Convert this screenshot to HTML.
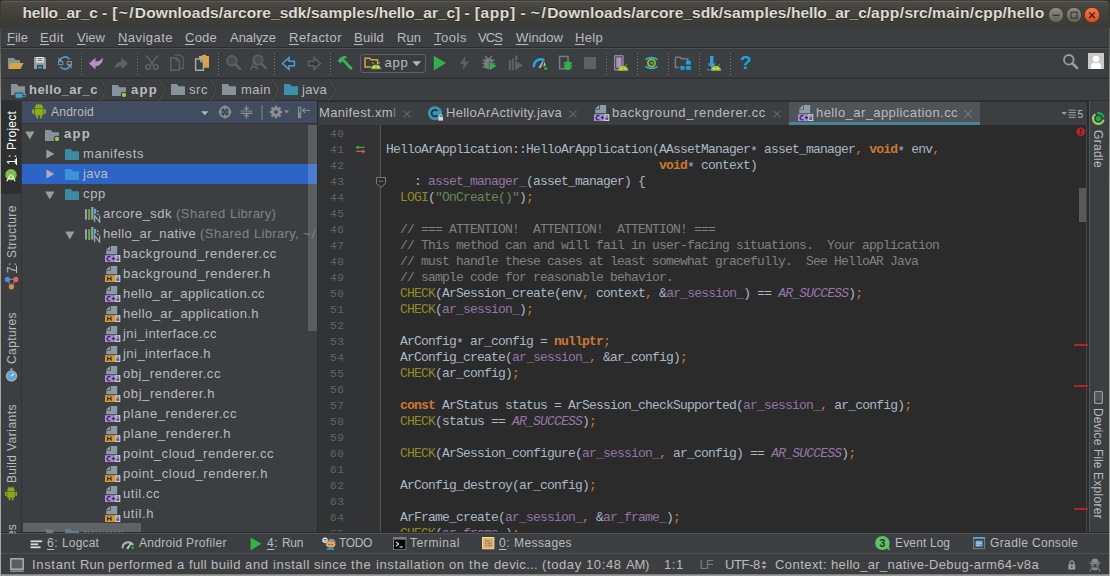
<!DOCTYPE html>
<html><head><meta charset="utf-8"><title>hello_ar_c</title>
<style>
html,body{margin:0;padding:0;}
body{width:1110px;height:576px;overflow:hidden;background:#3c3f41;position:relative;font-family:"Liberation Sans", sans-serif;}
#r{position:absolute;left:0;top:0;width:1110px;height:576px;overflow:hidden;}
#r div,#r svg,#r span.t,#r pre{position:absolute;}
span.t{white-space:pre;line-height:16px;text-underline-offset:1.5px;}
u{text-decoration:underline;text-decoration-thickness:1px;}
pre{margin:0;font-family:"Liberation Mono", monospace;}
</style></head>
<body><div id="r">
<div style="left:0px;top:0px;width:1110px;height:28px;background:#33322e;"></div>
<div style="left:0px;top:0px;width:1110px;height:28px;background:linear-gradient(#3f3e3a 0px,#3f3e3a 1px,#5b5a54 1px,#5b5a54 2px,#4b4a45 2px,#45443f 8px,#3e3d39 20px,#3b3a36 28px);border-radius:5px 6px 0 0;"></div>
<div style="left:0px;top:4px;width:1px;height:24px;background:#3a3935;"></div>
<div style="left:1109px;top:4px;width:1px;height:24px;background:#3a3935;"></div>
<div style="left:0px;top:28px;width:1110px;height:20px;background:#3c3f41;"></div>
<div style="left:0px;top:47px;width:1110px;height:1px;background:#2a2c2d;"></div>
<div style="left:0px;top:48px;width:1110px;height:1px;background:#4d5052;"></div>
<div style="left:0px;top:49px;width:1110px;height:29px;background:#3c3f41;"></div>
<div style="left:0px;top:77px;width:1110px;height:1px;background:#36393b;"></div>
<div style="left:0px;top:78px;width:1110px;height:1px;background:#2d2f31;"></div>
<div style="left:0px;top:79px;width:1110px;height:22px;background:#3c3f41;"></div>
<div style="left:0px;top:100px;width:1110px;height:1px;background:#2f3132;"></div>
<div style="left:0px;top:101px;width:22px;height:432px;background:#3c3f41;"></div>
<div style="left:1px;top:101px;width:20px;height:93px;background:#2d2f30;"></div>
<div style="left:21px;top:101px;width:1px;height:432px;background:#323435;"></div>
<div style="left:22px;top:101px;width:295px;height:22px;background:#414c60;"></div>
<div style="left:22px;top:123px;width:295px;height:1px;background:#2f3440;"></div>
<div style="left:22px;top:124px;width:295px;height:409px;background:#3c3f41;"></div>
<div style="left:22px;top:164px;width:295px;height:20px;background:#2d64c8;"></div>
<div style="left:308px;top:125px;width:8.5px;height:206px;background:rgba(255,255,255,.16);"></div>
<div style="left:22px;top:523px;width:286px;height:9px;background:#3d4042;"></div>
<div style="left:23px;top:523px;width:118px;height:9px;background:#606264;"></div>
<div style="left:317px;top:101px;width:1px;height:432px;background:#2b2b2b;"></div>
<div style="left:318px;top:101px;width:770px;height:24px;background:#3c3f41;"></div>
<div style="left:317px;top:101px;width:771px;height:1px;background:#2b2b2b;"></div>
<div style="left:789px;top:102px;width:191px;height:20px;background:#4e5457;"></div>
<div style="left:789px;top:122px;width:191px;height:3px;background:#4a8396;"></div>
<div style="left:318px;top:125px;width:62px;height:408px;background:#313335;"></div>
<div style="left:380px;top:125px;width:1px;height:408px;background:#555555;"></div>
<div style="left:381px;top:125px;width:697px;height:408px;background:#2b2b2b;"></div>
<div style="left:1078px;top:125px;width:10px;height:408px;background:#2b2b2b;"></div>
<div style="left:1079px;top:188px;width:8px;height:34px;background:#595959;"></div>
<div style="left:1086px;top:125px;width:1px;height:407px;background:#48494b;"></div>
<div style="left:1087px;top:101px;width:2px;height:431px;background:#2b2b2b;"></div>
<div style="left:1090px;top:101px;width:20px;height:432px;background:#3c3f41;"></div>
<div style="left:1089px;top:101px;width:1px;height:431px;background:#555759;"></div>
<div style="left:1074px;top:344px;width:14px;height:2px;background:#b02626;"></div>
<div style="left:1074px;top:385px;width:14px;height:2px;background:#b02626;"></div>
<div style="left:1074px;top:508px;width:14px;height:2px;background:#b02626;"></div>
<div style="left:0px;top:532px;width:1110px;height:1px;background:#2b2b2b;"></div>
<div style="left:0px;top:533px;width:1110px;height:1px;background:#505254;"></div>
<div style="left:0px;top:534px;width:1110px;height:20px;background:#3c3f41;"></div>
<div style="left:0px;top:553px;width:1110px;height:1px;background:#4e4f50;"></div>
<div style="left:0px;top:554px;width:1110px;height:22px;background:#3c3f41;"></div>
<div style="left:0px;top:574px;width:1110px;height:2px;background:linear-gradient(#76746f,#aaa69f);"></div>
<div style="left:0px;top:28px;width:1px;height:548px;background:linear-gradient(#4a4843 0,#a9a69f 90px,#a9a69f 100%);"></div>
<div style="left:1109px;top:28px;width:1px;height:548px;background:linear-gradient(#5e5d59 0,#aaa69f 160px,#aaa69f 100%);"></div>
<div style="left:81px;top:53px;width:1px;height:22px;background:repeating-linear-gradient(#77797b 0 1px,transparent 1px 3px);"></div>
<div style="left:137px;top:53px;width:1px;height:22px;background:repeating-linear-gradient(#77797b 0 1px,transparent 1px 3px);"></div>
<div style="left:218px;top:53px;width:1px;height:22px;background:repeating-linear-gradient(#77797b 0 1px,transparent 1px 3px);"></div>
<div style="left:274px;top:53px;width:1px;height:22px;background:repeating-linear-gradient(#77797b 0 1px,transparent 1px 3px);"></div>
<div style="left:330px;top:53px;width:1px;height:22px;background:repeating-linear-gradient(#77797b 0 1px,transparent 1px 3px);"></div>
<div style="left:606px;top:53px;width:1px;height:22px;background:repeating-linear-gradient(#77797b 0 1px,transparent 1px 3px);"></div>
<div style="left:637px;top:53px;width:1px;height:22px;background:repeating-linear-gradient(#77797b 0 1px,transparent 1px 3px);"></div>
<div style="left:668px;top:53px;width:1px;height:22px;background:repeating-linear-gradient(#77797b 0 1px,transparent 1px 3px);"></div>
<div style="left:699px;top:53px;width:1px;height:22px;background:repeating-linear-gradient(#77797b 0 1px,transparent 1px 3px);"></div>
<div style="left:730px;top:53px;width:1px;height:22px;background:repeating-linear-gradient(#77797b 0 1px,transparent 1px 3px);"></div>
<svg style="left:7px;top:56px;" width="17" height="14" viewBox="0 0 17 14"><path d="M1 2h6l1.5 2H13v7H1z" fill="#87939a"/><path d="M4 7h12.5l-3 6H0.8z" fill="#d9a343"/></svg>
<svg style="left:33px;top:56px;" width="14" height="14" viewBox="0 0 14 14"><path d="M1 1h10.5L13 2.5V13H1z" fill="#9a9da0"/><rect x="3.5" y="1" width="7" height="5.5" fill="#f4f4f4"/><rect x="4.5" y="2.2" width="5" height="1" fill="#555"/><rect x="4.5" y="4.2" width="5" height="1" fill="#555"/><rect x="4" y="9" width="6" height="4" fill="#3c3f41"/><rect x="5.2" y="10.4" width="3.6" height="2" fill="#3d9dd6"/></svg>
<svg style="left:57px;top:55px;" width="16" height="16" viewBox="0 0 16 16"><path d="M3.2 5.2A5.3 5.3 0 0 1 12.6 4.4" fill="none" stroke="#4a9fd8" stroke-width="1.6"/><path d="M1.3 2.2v4h4z" fill="#4a9fd8"/><path d="M12.8 10.8A5.3 5.3 0 0 1 3.4 11.6" fill="none" stroke="#4a9fd8" stroke-width="1.6"/><path d="M14.7 13.8v-4h-4z" fill="#4a9fd8"/><rect x="1.6" y="6.6" width="4.2" height="3" fill="none" stroke="#8a8d8f" stroke-width="1.1"/><rect x="10.2" y="6.6" width="4.2" height="3" fill="none" stroke="#8a8d8f" stroke-width="1.1"/></svg>
<svg style="left:88px;top:56px;" width="16" height="15" viewBox="0 0 16 15"><path d="M1 7.5L7.5 1.8V5.4C11 5.4 13.6 3.9 15 1.5C15 7 12 10 7.5 10.2V13.6z" fill="#ba8acb"/></svg>
<svg style="left:113px;top:56px;" width="16" height="15" viewBox="0 0 16 15"><path d="M15 7.5L8.5 1.8V5.4C5 5.4 2.4 7.6 1.4 12.5C3.3 10.6 5.6 10.2 8.5 10.2V13.6z" fill="#5e6163"/></svg>
<svg style="left:144px;top:54px;" width="16" height="17" viewBox="0 0 16 17"><path d="M2.2 1.2L9.6 11.4M13.8 1.2L6.4 11.4" stroke="#5e6163" stroke-width="1.5" fill="none"/><circle cx="4.2" cy="13" r="2.3" fill="none" stroke="#5e6163" stroke-width="1.6"/><circle cx="11.8" cy="13" r="2.3" fill="none" stroke="#5e6163" stroke-width="1.6"/></svg>
<svg style="left:169px;top:54px;" width="16" height="17" viewBox="0 0 16 17"><path d="M5.5 1.2h6L14.3 4v10.3H11" fill="none" stroke="#5e6163" stroke-width="1.3"/><path d="M1.8 3.8h5.8l2.8 2.8V16.2H1.8z" fill="none" stroke="#5e6163" stroke-width="1.5"/><path d="M7.2 4v3h3" fill="none" stroke="#5e6163" stroke-width="1.1"/></svg>
<svg style="left:194px;top:54px;" width="16" height="17" viewBox="0 0 16 17"><path d="M5 2h3.2v-1h3.6v1H15v11.8H5z" fill="#d9a343"/><rect x="9" y="0.8" width="3" height="1" fill="#b5b5b5"/><path d="M1.6 5h5.2l2.6 2.6V16.2H1.6z" fill="#3c3f41" stroke="#a9a9a9" stroke-width="1.4"/><path d="M6.6 5.4v2.6h2.6" fill="none" stroke="#a9a9a9" stroke-width="1"/></svg>
<svg style="left:225px;top:54px;" width="17" height="17" viewBox="0 0 17 17"><circle cx="6.8" cy="6.8" r="4.9" fill="#4a4c4e" stroke="#5e6163" stroke-width="1.7"/><path d="M10.4 10.4L15 15" stroke="#5e6163" stroke-width="2.6" stroke-linecap="round"/></svg>
<svg style="left:249px;top:54px;" width="18" height="17" viewBox="0 0 18 17"><circle cx="9" cy="6" r="4.7" fill="#4a4c4e" stroke="#5e6163" stroke-width="1.7"/><path d="M12.4 9.6L16.5 13.8" stroke="#5e6163" stroke-width="2.6" stroke-linecap="round"/><path d="M1.6 16L5.2 7.6L8.8 16M2.8 13h4.8" stroke="#5e6163" stroke-width="1.3" fill="none"/></svg>
<svg style="left:281px;top:56px;" width="15" height="15" viewBox="0 0 15 15"><path d="M1.6 7.5L8 1.6V5.2H13.4V9.8H8V13.4z" fill="#36393b" stroke="#4a9fd8" stroke-width="1.5" stroke-linejoin="miter"/></svg>
<svg style="left:307px;top:56px;" width="15" height="15" viewBox="0 0 15 15"><path d="M13.4 7.5L7 1.6V5.2H1.6V9.8H7V13.4z" fill="#36393b" stroke="#5e6163" stroke-width="1.5"/></svg>
<svg style="left:337px;top:55px;" width="16" height="16" viewBox="0 0 16 16"><path d="M6.4 5.2L14 13.2" stroke="#3bb254" stroke-width="2.8" stroke-linecap="round"/><path d="M1 6.4C1.6 3.2 5 0.6 9.2 1L9.8 3.4C8.2 3.2 7 3.8 6.2 4.6L3.8 8.6z" fill="#3bb254"/></svg>
<div style="left:360px;top:54px;width:64px;height:17px;border:1px solid #5f6264;border-radius:3px;background:#3a3d3f;"></div>
<svg style="left:364px;top:57px;" width="18" height="13" viewBox="0 0 18 13"><path d="M1 1.2h4.6l1.4 1.6h6.6V10H1z" fill="none" stroke="#d9a343" stroke-width="1.5"/><path d="M6.6 12.4a5.4 5.2 0 0 1 10.8 0z" fill="#a4c639" stroke="#3a3d3f" stroke-width=".8"/><path d="M8.4 5.2l1.2 2M15.6 5.2l-1.2 2" stroke="#a4c639" stroke-width="1"/><circle cx="9.8" cy="10" r=".8" fill="#fff"/><circle cx="14.2" cy="10" r=".8" fill="#fff"/></svg>
<svg style="left:412px;top:61px;" width="10" height="6" viewBox="0 0 10 6"><path d="M0.4 0.2H9L4.7 5.2z" fill="#b4b4b4"/></svg>
<svg style="left:433px;top:55px;" width="14" height="16" viewBox="0 0 14 16"><path d="M0.8 0.8L13 8L0.8 15.4z" fill="#32b14a"/></svg>
<svg style="left:459px;top:55px;" width="11" height="16" viewBox="0 0 11 16"><path d="M6.6 0.4L0.8 9h3.8L3.6 15.6 9.8 6.6H6z" fill="#5e6163"/></svg>
<svg style="left:482px;top:55px;" width="16" height="16" viewBox="0 0 16 16"><ellipse cx="6.6" cy="8.6" rx="4.6" ry="5.6" fill="#7a7d80"/><path d="M0.8 5.2h11.6M0.4 8.6h12.4M0.8 12h11.6M3.4 0.8l2 3M9.8 0.8l-2 3" stroke="#7a7d80" stroke-width="1.4"/><path d="M7.4 6.2L15.2 10.8 7.4 15.6z" fill="#32b14a" stroke="#3c3f41" stroke-width=".6"/></svg>
<svg style="left:508px;top:55px;" width="16" height="16" viewBox="0 0 16 16"><rect x="0.8" y="5" width="2" height="10" fill="#5e6163"/><rect x="3.8" y="3.6" width="2" height="11.4" fill="#5e6163"/><rect x="7" y="0.6" width="2.6" height="4.4" fill="#5e6163"/><path d="M7 5.6L15 10.4 7 15.2z" fill="#5e6163"/></svg>
<svg style="left:532px;top:57px;" width="18" height="15" viewBox="0 0 18 15"><path d="M2 10.2A6.8 6.8 0 0 1 12.4 3.4" fill="none" stroke="#22a7f0" stroke-width="2.3"/><path d="M6.2 10.6L10.6 4l1 .6-2.8 6.6z" fill="#a8a8a8"/><path d="M12.2 4.6l1.6 4.2-2.4 1.4z" fill="#c8c8c8"/><circle cx="13.8" cy="11.6" r="2.4" fill="#2ea043" stroke="#262626" stroke-width=".9"/></svg>
<svg style="left:558px;top:55px;" width="15" height="16" viewBox="0 0 15 16"><rect x="1.6" y="1.4" width="8.4" height="12.4" fill="none" stroke="#7a7d80" stroke-width="1.5"/><ellipse cx="9.8" cy="10.6" rx="3" ry="4.6" fill="#32b14a"/><path d="M5.6 8h8.4M5.2 10.6h9.2M5.6 13.2h8.4" stroke="#32b14a" stroke-width="1.3"/></svg>
<svg style="left:584px;top:57px;" width="12" height="12" viewBox="0 0 12 12"><rect width="12" height="12" fill="#5e6163"/></svg>
<svg style="left:613px;top:55px;" width="16" height="16" viewBox="0 0 16 16"><rect x="1.6" y="0.8" width="8.4" height="14" rx=".6" fill="none" stroke="#8a8d8f" stroke-width="1.4"/><rect x="3.2" y="2.4" width="5.4" height="10.4" fill="#b689c9"/><path d="M5 15.8a5.1 5 0 0 1 10.2 0z" fill="#a4c639"/><path d="M6.6 9.4l1 1.6M13.6 9.4l-1 1.6" stroke="#a4c639" stroke-width=".9"/><circle cx="8.2" cy="13.6" r=".7" fill="#fff"/><circle cx="12" cy="13.6" r=".7" fill="#fff"/></svg>
<svg style="left:644px;top:56px;" width="15" height="14" viewBox="0 0 15 14"><path d="M1.4 3.6Q7.5-0.6 13.6 3.6" fill="none" stroke="#29b6d8" stroke-width="1.5"/><path d="M1.4 10.4Q7.5 14.6 13.6 10.4" fill="none" stroke="#29b6d8" stroke-width="1.5"/><circle cx="7.5" cy="7" r="3.6" fill="none" stroke="#9bbf30" stroke-width="1.7"/><circle cx="7.8" cy="7" r="1.6" fill="#3daa6a"/></svg>
<svg style="left:674px;top:56px;" width="18" height="14" viewBox="0 0 18 14"><path d="M1.4 1.2h4.6l1.4 1.6h6.4v3M1.4 1.2V11.6H5" fill="none" stroke="#7a7d80" stroke-width="1.5"/><rect x="12" y="4.6" width="4.8" height="4" fill="#1ba1e2"/><rect x="6.4" y="10" width="4.2" height="3.8" fill="#1ba1e2"/><rect x="12" y="10" width="4.8" height="3.8" fill="#1ba1e2"/></svg>
<svg style="left:706px;top:55px;" width="16" height="16" viewBox="0 0 16 16"><path d="M4 1h3.4v7.6H10L5.7 12.8 1.4 8.6H4z" fill="#2d9ee0"/><rect x="0.8" y="14.2" width="3.2" height="1" fill="#2d9ee0"/><path d="M4.8 15.8a5.1 5 0 0 1 10.2 0z" fill="#a4c639"/><path d="M6.4 9.4l1 1.6M13.4 9.4l-1 1.6" stroke="#a4c639" stroke-width=".9"/><circle cx="8" cy="13.6" r=".7" fill="#fff"/><circle cx="11.8" cy="13.6" r=".7" fill="#fff"/></svg>
<svg style="left:1062px;top:53px;" width="17" height="17" viewBox="0 0 17 17"><circle cx="6.8" cy="6.8" r="4.8" fill="none" stroke="#9a9c9e" stroke-width="1.8"/><path d="M10.4 10.4L15 15" stroke="#9a9c9e" stroke-width="2.6" stroke-linecap="round"/></svg>
<svg style="left:1088px;top:53px;" width="16" height="16" viewBox="0 0 16 16"><rect width="16" height="16" fill="#c8c8c8"/><circle cx="8" cy="6" r="3.2" fill="#fff"/><path d="M3 16v-3.4a2.6 2.6 0 0 1 2.6-2.6h4.8a2.6 2.6 0 0 1 2.6 2.6V16z" fill="#fff"/></svg>
<svg style="left:0;top:0" width="0" height="0"><defs><linearGradient id="gg" x1="0" y1="0" x2="0" y2="1"><stop offset="0" stop-color="#8f8d85"/><stop offset="1" stop-color="#605f59"/></linearGradient><linearGradient id="gc" x1="0" y1="0" x2="0" y2="1"><stop offset="0" stop-color="#f27e55"/><stop offset="1" stop-color="#dd4814"/></linearGradient></defs></svg>
<svg style="left:1046.5px;top:5.5px;" width="18" height="18" viewBox="0 0 18 18"><circle cx="9" cy="9" r="7.7" fill="url(#gg)" stroke="#32312d" stroke-width=".8"/><path d="M5.6 9.3h6.8" stroke="#3a3935" stroke-width="1.4"/></svg>
<svg style="left:1064.5px;top:5.5px;" width="18" height="18" viewBox="0 0 18 18"><circle cx="9" cy="9" r="7.7" fill="url(#gg)" stroke="#32312d" stroke-width=".8"/><rect x="6" y="6.2" width="6" height="6" fill="none" stroke="#3a3935" stroke-width="1.2"/></svg>
<svg style="left:1082.5px;top:5.5px;" width="18" height="18" viewBox="0 0 18 18"><circle cx="9" cy="9" r="7.7" fill="url(#gc)" stroke="#4e2a1a" stroke-width=".8"/><path d="M6.2 6.4l5.6 5.6M11.8 6.4l-5.6 5.6" stroke="#3d2016" stroke-width="1.3"/></svg>
<svg style="left:11px;top:84px;" width="14" height="11" viewBox="0 0 14 11"><path d="M0 0h5.9l1.7 2.2H14V11H0z" fill="#87939a"/></svg>
<svg style="left:14px;top:92px;" width="13" height="7" viewBox="0 0 13 7"><path d="M1 1h8v3.4a2 2 0 0 1-2 2H3a2 2 0 0 1-2-2z" fill="#40a0d0" stroke="#3c3f41" stroke-width="1"/><path d="M9 2h1.6a1.2 1.2 0 0 1 0 2.6H9" fill="none" stroke="#40a0d0" stroke-width="1"/></svg>
<svg style="left:97.5px;top:79px;" width="9" height="22" viewBox="0 0 9 22"><path d="M0.5 0L7 11 0.5 22" fill="none" stroke="#2f3132" stroke-width="1"/><path d="M1.5 0L8 11 1.5 22" fill="none" stroke="#505355" stroke-width="1"/></svg>
<svg style="left:112px;top:84.5px;" width="14" height="11" viewBox="0 0 14 11"><path d="M0 0h5.9l1.7 2.2H14V11H0z" fill="#87939a"/></svg>
<svg style="left:119.5px;top:90.5px;" width="8" height="8" viewBox="0 0 8 8"><circle cx="4" cy="4" r="2.7" fill="#a4c639" stroke="#3c3f41" stroke-width="1.1"/></svg>
<svg style="left:157px;top:79px;" width="9" height="22" viewBox="0 0 9 22"><path d="M0.5 0L7 11 0.5 22" fill="none" stroke="#2f3132" stroke-width="1"/><path d="M1.5 0L8 11 1.5 22" fill="none" stroke="#505355" stroke-width="1"/></svg>
<svg style="left:171px;top:84px;" width="14" height="11" viewBox="0 0 14 11"><path d="M0 0h5.9l1.7 2.2H14V11H0z" fill="#87939a"/></svg>
<svg style="left:208px;top:79px;" width="9" height="22" viewBox="0 0 9 22"><path d="M0.5 0L7 11 0.5 22" fill="none" stroke="#2f3132" stroke-width="1"/><path d="M1.5 0L8 11 1.5 22" fill="none" stroke="#505355" stroke-width="1"/></svg>
<svg style="left:222px;top:84px;" width="14" height="11" viewBox="0 0 14 11"><path d="M0 0h5.9l1.7 2.2H14V11H0z" fill="#87939a"/></svg>
<svg style="left:270px;top:79px;" width="9" height="22" viewBox="0 0 9 22"><path d="M0.5 0L7 11 0.5 22" fill="none" stroke="#2f3132" stroke-width="1"/><path d="M1.5 0L8 11 1.5 22" fill="none" stroke="#505355" stroke-width="1"/></svg>
<svg style="left:284px;top:84px;" width="14" height="11" viewBox="0 0 14 11"><path d="M0 0h5.9l1.7 2.2H14V11H0z" fill="#3d8fb0"/></svg>
<svg style="left:327px;top:79px;" width="9" height="22" viewBox="0 0 9 22"><path d="M0.5 0L7 11 0.5 22" fill="none" stroke="#2f3132" stroke-width="1"/><path d="M1.5 0L8 11 1.5 22" fill="none" stroke="#505355" stroke-width="1"/></svg>
<svg style="left:31px;top:103px;" width="16" height="16" viewBox="0 0 16 16"><path d="M3.6 5.4a4.4 4.2 0 0 1 8.8 0z" fill="#8aaa1c"/><path d="M5 0.6l1.2 1.8M11 0.6L9.8 1.8" stroke="#8aaa1c" stroke-width=".9"/><rect x="3.6" y="6" width="8.8" height="6.6" rx=".8" fill="#8aaa1c"/><rect x="1.2" y="6" width="1.8" height="5" rx=".9" fill="#8aaa1c"/><rect x="13" y="6" width="1.8" height="5" rx=".9" fill="#8aaa1c"/><rect x="5.2" y="12" width="1.9" height="3.4" rx=".9" fill="#8aaa1c"/><rect x="8.9" y="12" width="1.9" height="3.4" rx=".9" fill="#8aaa1c"/></svg>
<svg style="left:201px;top:111px;" width="8" height="5" viewBox="0 0 8 5"><path d="M0.2 0.2H7.4L3.8 4.2z" fill="#b4b4b4"/></svg>
<svg style="left:218px;top:105px;" width="14" height="14" viewBox="0 0 14 14"><circle cx="7" cy="7" r="5.2" fill="none" stroke="#8c8e90" stroke-width="1.9"/><path d="M7 0.6v4.2M7 9.2v4.2M0.6 7h4.2M9.2 7h4.2" stroke="#8c8e90" stroke-width="1.7"/></svg>
<svg style="left:240px;top:105px;" width="13" height="14" viewBox="0 0 13 14"><path d="M0.6 6h11.8M0.6 8.4h11.8M6.5 0.4v4.2M6.5 13.6V9.6M4.2 2.6l2.3 2.2 2.3-2.2M4.2 11.6l2.3-2.2 2.3 2.2" fill="none" stroke="#8c8e90" stroke-width="1.1"/></svg>
<div style="left:261px;top:105px;width:2px;height:15px;background:linear-gradient(90deg,#6c7078,#5a5f68);"></div>
<svg style="left:269px;top:105px;" width="14" height="14" viewBox="0 0 14 14"><circle cx="7" cy="7" r="3.3" fill="none" stroke="#8c8e90" stroke-width="2.8"/><path d="M7 0.8v2.4M7 10.8v2.4M0.8 7h2.4M10.8 7h2.4M2.6 2.6l1.7 1.7M9.7 9.7l1.7 1.7M2.6 11.4l1.7-1.7M9.7 4.3l1.7-1.7" stroke="#8c8e90" stroke-width="2.4"/></svg>
<svg style="left:284px;top:110px;" width="5" height="4" viewBox="0 0 5 4"><path d="M0 0.2H5L2.5 3.4z" fill="#8c8e90"/></svg>
<svg style="left:297px;top:105px;" width="14" height="14" viewBox="0 0 14 14"><rect x="1.5" y="2.3" width="2.2" height="10.4" fill="none" stroke="#8c8e90" stroke-width="1"/><rect x="1.9" y="7.6" width="1.4" height="4.6" fill="#8c8e90"/><path d="M5.6 5.5h7.4M8 3.2L5.6 5.5 8 7.8" fill="none" stroke="#8c8e90" stroke-width="1.1"/></svg>
<svg style="left:24.5px;top:130.5px;" width="10" height="9" viewBox="0 0 10 9"><path d="M0.2 0.6H9.4L4.8 8.6z" fill="#9c9c9c"/></svg>
<svg style="left:45px;top:129.5px;" width="14" height="11" viewBox="0 0 14 11"><path d="M0 0h5.9l1.7 2.2H14V11H0z" fill="#87939a"/></svg>
<svg style="left:52.5px;top:134.5px;" width="8" height="8" viewBox="0 0 8 8"><circle cx="4" cy="4" r="2.7" fill="#a4c639" stroke="#3c3f41" stroke-width="1.1"/></svg>
<svg style="left:46px;top:148.5px;" width="9" height="10" viewBox="0 0 9 10"><path d="M0.4 0.4L8.4 5 0.4 9.6z" fill="#9c9c9c"/></svg>
<svg style="left:65px;top:148.8px;" width="14" height="11" viewBox="0 0 14 11"><path d="M0 0h5.9l1.7 2.2H14V11H0z" fill="#3d8ba3"/></svg>
<svg style="left:46px;top:168.5px;" width="9" height="10" viewBox="0 0 9 10"><path d="M0.4 0.4L8.4 5 0.4 9.6z" fill="#a9adb5"/></svg>
<svg style="left:65px;top:168.8px;" width="14" height="11" viewBox="0 0 14 11"><path d="M0 0h5.9l1.7 2.2H14V11H0z" fill="#3a94d6"/></svg>
<svg style="left:44.5px;top:190.5px;" width="10" height="9" viewBox="0 0 10 9"><path d="M0.2 0.6H9.4L4.8 8.6z" fill="#9c9c9c"/></svg>
<svg style="left:65px;top:188.8px;" width="14" height="11" viewBox="0 0 14 11"><path d="M0 0h5.9l1.7 2.2H14V11H0z" fill="#3d8ba3"/></svg>
<svg style="left:85px;top:207px;" width="16" height="16" viewBox="0 0 16 16"><rect x="0" y="2.2" width="2" height="10.4" fill="#9aa1a6"/><rect x="3.2" y="2.2" width="2" height="10.8" fill="#62b543"/><rect x="6.2" y="0" width="2.2" height="12.6" fill="#9aa1a6"/><rect x="9" y="1.8" width="2.2" height="5" fill="#40b6e0"/><rect x="12" y="3.6" width="1.6" height="1.4" fill="#9aa1a6"/><rect x="12" y="6.6" width="1.6" height="1.4" fill="#9aa1a6"/><path d="M9.6 15V8.6L14.6 15V8.6" fill="none" stroke="#9aa7b0" stroke-width="1.3"/></svg>
<svg style="left:85px;top:227px;" width="16" height="16" viewBox="0 0 16 16"><rect x="0" y="2.2" width="2" height="10.4" fill="#9aa1a6"/><rect x="3.2" y="2.2" width="2" height="10.8" fill="#62b543"/><rect x="6.2" y="0" width="2.2" height="12.6" fill="#9aa1a6"/><rect x="9" y="1.8" width="2.2" height="5" fill="#40b6e0"/><rect x="12" y="3.6" width="1.6" height="1.4" fill="#9aa1a6"/><rect x="12" y="6.6" width="1.6" height="1.4" fill="#9aa1a6"/><path d="M9.6 15V8.6L14.6 15V8.6" fill="none" stroke="#9aa7b0" stroke-width="1.3"/></svg>
<svg style="left:64.5px;top:230.5px;" width="10" height="9" viewBox="0 0 10 9"><path d="M0.2 0.6H9.4L4.8 8.6z" fill="#9c9c9c"/></svg>
<svg style="left:105px;top:246px;" width="16" height="16" viewBox="0 0 16 16"><path d="M6 0H12.2V8.2H1.2V4.6H6z" fill="#8c9ba5"/><path d="M5.2 0V3.8H1.2z" fill="#9aa7b0"/><rect x="0" y="9.2" width="15.2" height="6.8" fill="#a78bd6"/><path d="M5.3 10.9a2 2.1 0 1 0 0 3.6" fill="none" stroke="#3b2a5c" stroke-width="1.3"/><path d="M6.9 12.7h3.2M8.5 11.1v3.2" stroke="#3b2a5c" stroke-width="1.2"/><rect x="10.4" y="9.2" width="4.8" height="6.8" fill="#c8d0d8"/><rect x="11.4" y="12.3" width="2.8" height="2.6" fill="#5a5470"/><path d="M11.9 12.3v-1.1a.9.9 0 0 1 1.8 0v1.1" fill="none" stroke="#5a5470" stroke-width=".8"/></svg>
<svg style="left:105px;top:266px;" width="16" height="16" viewBox="0 0 16 16"><path d="M6 0H12.2V8.2H1.2V4.6H6z" fill="#8c9ba5"/><path d="M5.2 0V3.8H1.2z" fill="#9aa7b0"/><rect x="0" y="9.2" width="15.2" height="6.8" fill="#cf9a3e"/><path d="M2.6 10.6v4.2M6 10.6v4.2M2.6 12.7H6" stroke="#4a3208" stroke-width="1.3" fill="none"/><rect x="10.4" y="9.2" width="4.8" height="6.8" fill="#c8d0d8"/><rect x="11.4" y="12.3" width="2.8" height="2.6" fill="#5a5470"/><path d="M11.9 12.3v-1.1a.9.9 0 0 1 1.8 0v1.1" fill="none" stroke="#5a5470" stroke-width=".8"/></svg>
<svg style="left:105px;top:286px;" width="16" height="16" viewBox="0 0 16 16"><path d="M6 0H12.2V8.2H1.2V4.6H6z" fill="#8c9ba5"/><path d="M5.2 0V3.8H1.2z" fill="#9aa7b0"/><rect x="0" y="9.2" width="15.2" height="6.8" fill="#a78bd6"/><path d="M5.3 10.9a2 2.1 0 1 0 0 3.6" fill="none" stroke="#3b2a5c" stroke-width="1.3"/><path d="M6.9 12.7h3.2M8.5 11.1v3.2" stroke="#3b2a5c" stroke-width="1.2"/><rect x="10.4" y="9.2" width="4.8" height="6.8" fill="#c8d0d8"/><rect x="11.4" y="12.3" width="2.8" height="2.6" fill="#5a5470"/><path d="M11.9 12.3v-1.1a.9.9 0 0 1 1.8 0v1.1" fill="none" stroke="#5a5470" stroke-width=".8"/></svg>
<svg style="left:105px;top:306px;" width="16" height="16" viewBox="0 0 16 16"><path d="M6 0H12.2V8.2H1.2V4.6H6z" fill="#8c9ba5"/><path d="M5.2 0V3.8H1.2z" fill="#9aa7b0"/><rect x="0" y="9.2" width="15.2" height="6.8" fill="#cf9a3e"/><path d="M2.6 10.6v4.2M6 10.6v4.2M2.6 12.7H6" stroke="#4a3208" stroke-width="1.3" fill="none"/><rect x="10.4" y="9.2" width="4.8" height="6.8" fill="#c8d0d8"/><rect x="11.4" y="12.3" width="2.8" height="2.6" fill="#5a5470"/><path d="M11.9 12.3v-1.1a.9.9 0 0 1 1.8 0v1.1" fill="none" stroke="#5a5470" stroke-width=".8"/></svg>
<svg style="left:105px;top:326px;" width="16" height="16" viewBox="0 0 16 16"><path d="M6 0H12.2V8.2H1.2V4.6H6z" fill="#8c9ba5"/><path d="M5.2 0V3.8H1.2z" fill="#9aa7b0"/><rect x="0" y="9.2" width="15.2" height="6.8" fill="#a78bd6"/><path d="M5.3 10.9a2 2.1 0 1 0 0 3.6" fill="none" stroke="#3b2a5c" stroke-width="1.3"/><path d="M6.9 12.7h3.2M8.5 11.1v3.2" stroke="#3b2a5c" stroke-width="1.2"/><rect x="10.4" y="9.2" width="4.8" height="6.8" fill="#c8d0d8"/><rect x="11.4" y="12.3" width="2.8" height="2.6" fill="#5a5470"/><path d="M11.9 12.3v-1.1a.9.9 0 0 1 1.8 0v1.1" fill="none" stroke="#5a5470" stroke-width=".8"/></svg>
<svg style="left:105px;top:346px;" width="16" height="16" viewBox="0 0 16 16"><path d="M6 0H12.2V8.2H1.2V4.6H6z" fill="#8c9ba5"/><path d="M5.2 0V3.8H1.2z" fill="#9aa7b0"/><rect x="0" y="9.2" width="15.2" height="6.8" fill="#cf9a3e"/><path d="M2.6 10.6v4.2M6 10.6v4.2M2.6 12.7H6" stroke="#4a3208" stroke-width="1.3" fill="none"/><rect x="10.4" y="9.2" width="4.8" height="6.8" fill="#c8d0d8"/><rect x="11.4" y="12.3" width="2.8" height="2.6" fill="#5a5470"/><path d="M11.9 12.3v-1.1a.9.9 0 0 1 1.8 0v1.1" fill="none" stroke="#5a5470" stroke-width=".8"/></svg>
<svg style="left:105px;top:366px;" width="16" height="16" viewBox="0 0 16 16"><path d="M6 0H12.2V8.2H1.2V4.6H6z" fill="#8c9ba5"/><path d="M5.2 0V3.8H1.2z" fill="#9aa7b0"/><rect x="0" y="9.2" width="15.2" height="6.8" fill="#a78bd6"/><path d="M5.3 10.9a2 2.1 0 1 0 0 3.6" fill="none" stroke="#3b2a5c" stroke-width="1.3"/><path d="M6.9 12.7h3.2M8.5 11.1v3.2" stroke="#3b2a5c" stroke-width="1.2"/><rect x="10.4" y="9.2" width="4.8" height="6.8" fill="#c8d0d8"/><rect x="11.4" y="12.3" width="2.8" height="2.6" fill="#5a5470"/><path d="M11.9 12.3v-1.1a.9.9 0 0 1 1.8 0v1.1" fill="none" stroke="#5a5470" stroke-width=".8"/></svg>
<svg style="left:105px;top:386px;" width="16" height="16" viewBox="0 0 16 16"><path d="M6 0H12.2V8.2H1.2V4.6H6z" fill="#8c9ba5"/><path d="M5.2 0V3.8H1.2z" fill="#9aa7b0"/><rect x="0" y="9.2" width="15.2" height="6.8" fill="#cf9a3e"/><path d="M2.6 10.6v4.2M6 10.6v4.2M2.6 12.7H6" stroke="#4a3208" stroke-width="1.3" fill="none"/><rect x="10.4" y="9.2" width="4.8" height="6.8" fill="#c8d0d8"/><rect x="11.4" y="12.3" width="2.8" height="2.6" fill="#5a5470"/><path d="M11.9 12.3v-1.1a.9.9 0 0 1 1.8 0v1.1" fill="none" stroke="#5a5470" stroke-width=".8"/></svg>
<svg style="left:105px;top:406px;" width="16" height="16" viewBox="0 0 16 16"><path d="M6 0H12.2V8.2H1.2V4.6H6z" fill="#8c9ba5"/><path d="M5.2 0V3.8H1.2z" fill="#9aa7b0"/><rect x="0" y="9.2" width="15.2" height="6.8" fill="#a78bd6"/><path d="M5.3 10.9a2 2.1 0 1 0 0 3.6" fill="none" stroke="#3b2a5c" stroke-width="1.3"/><path d="M6.9 12.7h3.2M8.5 11.1v3.2" stroke="#3b2a5c" stroke-width="1.2"/><rect x="10.4" y="9.2" width="4.8" height="6.8" fill="#c8d0d8"/><rect x="11.4" y="12.3" width="2.8" height="2.6" fill="#5a5470"/><path d="M11.9 12.3v-1.1a.9.9 0 0 1 1.8 0v1.1" fill="none" stroke="#5a5470" stroke-width=".8"/></svg>
<svg style="left:105px;top:426px;" width="16" height="16" viewBox="0 0 16 16"><path d="M6 0H12.2V8.2H1.2V4.6H6z" fill="#8c9ba5"/><path d="M5.2 0V3.8H1.2z" fill="#9aa7b0"/><rect x="0" y="9.2" width="15.2" height="6.8" fill="#cf9a3e"/><path d="M2.6 10.6v4.2M6 10.6v4.2M2.6 12.7H6" stroke="#4a3208" stroke-width="1.3" fill="none"/><rect x="10.4" y="9.2" width="4.8" height="6.8" fill="#c8d0d8"/><rect x="11.4" y="12.3" width="2.8" height="2.6" fill="#5a5470"/><path d="M11.9 12.3v-1.1a.9.9 0 0 1 1.8 0v1.1" fill="none" stroke="#5a5470" stroke-width=".8"/></svg>
<svg style="left:105px;top:446px;" width="16" height="16" viewBox="0 0 16 16"><path d="M6 0H12.2V8.2H1.2V4.6H6z" fill="#8c9ba5"/><path d="M5.2 0V3.8H1.2z" fill="#9aa7b0"/><rect x="0" y="9.2" width="15.2" height="6.8" fill="#a78bd6"/><path d="M5.3 10.9a2 2.1 0 1 0 0 3.6" fill="none" stroke="#3b2a5c" stroke-width="1.3"/><path d="M6.9 12.7h3.2M8.5 11.1v3.2" stroke="#3b2a5c" stroke-width="1.2"/><rect x="10.4" y="9.2" width="4.8" height="6.8" fill="#c8d0d8"/><rect x="11.4" y="12.3" width="2.8" height="2.6" fill="#5a5470"/><path d="M11.9 12.3v-1.1a.9.9 0 0 1 1.8 0v1.1" fill="none" stroke="#5a5470" stroke-width=".8"/></svg>
<svg style="left:105px;top:466px;" width="16" height="16" viewBox="0 0 16 16"><path d="M6 0H12.2V8.2H1.2V4.6H6z" fill="#8c9ba5"/><path d="M5.2 0V3.8H1.2z" fill="#9aa7b0"/><rect x="0" y="9.2" width="15.2" height="6.8" fill="#cf9a3e"/><path d="M2.6 10.6v4.2M6 10.6v4.2M2.6 12.7H6" stroke="#4a3208" stroke-width="1.3" fill="none"/><rect x="10.4" y="9.2" width="4.8" height="6.8" fill="#c8d0d8"/><rect x="11.4" y="12.3" width="2.8" height="2.6" fill="#5a5470"/><path d="M11.9 12.3v-1.1a.9.9 0 0 1 1.8 0v1.1" fill="none" stroke="#5a5470" stroke-width=".8"/></svg>
<svg style="left:105px;top:486px;" width="16" height="16" viewBox="0 0 16 16"><path d="M6 0H12.2V8.2H1.2V4.6H6z" fill="#8c9ba5"/><path d="M5.2 0V3.8H1.2z" fill="#9aa7b0"/><rect x="0" y="9.2" width="15.2" height="6.8" fill="#a78bd6"/><path d="M5.3 10.9a2 2.1 0 1 0 0 3.6" fill="none" stroke="#3b2a5c" stroke-width="1.3"/><path d="M6.9 12.7h3.2M8.5 11.1v3.2" stroke="#3b2a5c" stroke-width="1.2"/><rect x="10.4" y="9.2" width="4.8" height="6.8" fill="#c8d0d8"/><rect x="11.4" y="12.3" width="2.8" height="2.6" fill="#5a5470"/><path d="M11.9 12.3v-1.1a.9.9 0 0 1 1.8 0v1.1" fill="none" stroke="#5a5470" stroke-width=".8"/></svg>
<svg style="left:105px;top:506px;" width="16" height="16" viewBox="0 0 16 16"><path d="M6 0H12.2V8.2H1.2V4.6H6z" fill="#8c9ba5"/><path d="M5.2 0V3.8H1.2z" fill="#9aa7b0"/><rect x="0" y="9.2" width="15.2" height="6.8" fill="#cf9a3e"/><path d="M2.6 10.6v4.2M6 10.6v4.2M2.6 12.7H6" stroke="#4a3208" stroke-width="1.3" fill="none"/><rect x="10.4" y="9.2" width="4.8" height="6.8" fill="#c8d0d8"/><rect x="11.4" y="12.3" width="2.8" height="2.6" fill="#5a5470"/><path d="M11.9 12.3v-1.1a.9.9 0 0 1 1.8 0v1.1" fill="none" stroke="#5a5470" stroke-width=".8"/></svg>
<svg style="left:402.5px;top:109.8px;" width="8" height="8" viewBox="0 0 8 8"><path d="M0.5 0.5l7 7M7.5 0.5l-7 7" stroke="#6e7072" stroke-width="1.05"/></svg>
<svg style="left:568.5px;top:109.8px;" width="8" height="8" viewBox="0 0 8 8"><path d="M0.5 0.5l7 7M7.5 0.5l-7 7" stroke="#6e7072" stroke-width="1.05"/></svg>
<svg style="left:772.5px;top:109.8px;" width="8" height="8" viewBox="0 0 8 8"><path d="M0.5 0.5l7 7M7.5 0.5l-7 7" stroke="#6e7072" stroke-width="1.05"/></svg>
<svg style="left:964px;top:109.8px;" width="8" height="8" viewBox="0 0 8 8"><path d="M0.5 0.5l7 7M7.5 0.5l-7 7" stroke="#7d8183" stroke-width="1.05"/></svg>
<svg style="left:428px;top:105px;" width="16" height="16" viewBox="0 0 16 16"><circle cx="7" cy="8.2" r="7" fill="#3a94b4"/><path d="M9.4 6a3.3 3.3 0 1 0 0 4.4" fill="none" stroke="#1f2f38" stroke-width="1.6"/><rect x="10.4" y="12" width="4.6" height="3.6" fill="#d8d8d8"/><path d="M11.4 12v-1.4a1.3 1.3 0 0 1 2.6 0v1.4" fill="none" stroke="#d8d8d8" stroke-width=".9"/></svg>
<svg style="left:594px;top:105px;" width="16" height="16" viewBox="0 0 16 16"><path d="M6 0H12.2V8.2H1.2V4.6H6z" fill="#8c9ba5"/><path d="M5.2 0V3.8H1.2z" fill="#9aa7b0"/><rect x="0" y="9.2" width="15.2" height="6.8" fill="#a78bd6"/><path d="M5.3 10.9a2 2.1 0 1 0 0 3.6" fill="none" stroke="#3b2a5c" stroke-width="1.3"/><path d="M6.9 12.7h3.2M8.5 11.1v3.2" stroke="#3b2a5c" stroke-width="1.2"/><rect x="10.4" y="9.2" width="4.8" height="6.8" fill="#c8d0d8"/><rect x="11.4" y="12.3" width="2.8" height="2.6" fill="#5a5470"/><path d="M11.9 12.3v-1.1a.9.9 0 0 1 1.8 0v1.1" fill="none" stroke="#5a5470" stroke-width=".8"/></svg>
<svg style="left:798px;top:105px;" width="16" height="16" viewBox="0 0 16 16"><path d="M6 0H12.2V8.2H1.2V4.6H6z" fill="#8c9ba5"/><path d="M5.2 0V3.8H1.2z" fill="#9aa7b0"/><rect x="0" y="9.2" width="15.2" height="6.8" fill="#a78bd6"/><path d="M5.3 10.9a2 2.1 0 1 0 0 3.6" fill="none" stroke="#3b2a5c" stroke-width="1.3"/><path d="M6.9 12.7h3.2M8.5 11.1v3.2" stroke="#3b2a5c" stroke-width="1.2"/><rect x="10.4" y="9.2" width="4.8" height="6.8" fill="#c8d0d8"/><rect x="11.4" y="12.3" width="2.8" height="2.6" fill="#5a5470"/><path d="M11.9 12.3v-1.1a.9.9 0 0 1 1.8 0v1.1" fill="none" stroke="#5a5470" stroke-width=".8"/></svg>
<svg style="left:1061px;top:109px;" width="22" height="10" viewBox="0 0 22 10"><path d="M0.4 3H6L3.2 6z" fill="#9a9c9e"/><path d="M7.6 1.2h7.2M7.6 3.6h7.2M7.6 6h7.2M7.6 8.4h7.2" stroke="#9a9c9e" stroke-width="1"/></svg>
<svg style="left:1076px;top:127px;" width="9.4" height="9.4" viewBox="0 0 10 10"><circle cx="5" cy="5" r="4.6" fill="#b5242a"/><rect x="4.2" y="1.8" width="1.6" height="4" fill="#2b2b2b"/><rect x="4.2" y="6.8" width="1.6" height="1.5" fill="#2b2b2b"/></svg>
<svg style="left:354.5px;top:144.5px;" width="11" height="9" viewBox="0 0 11 9"><path d="M3.6 0.2L0.4 2.4l3.2 2.2V3.1h6.2V1.7H3.6z" fill="#3daa44"/><path d="M7.4 4.2L10.6 6.4 7.4 8.6V7.1H1.2V5.7h6.2z" fill="#e05545"/></svg>
<svg style="left:375.5px;top:177px;" width="11" height="11" viewBox="0 0 11 11"><path d="M0.5 0.5h9v6L5 10.2 0.5 6.5z" fill="#2b2b2b" stroke="#7a7d7f" stroke-width="1"/><path d="M2.8 4.2h4.4" stroke="#7a7d7f" stroke-width="1"/></svg>
<svg style="left:4.1px;top:168px;" width="14" height="15" viewBox="0 0 14 15"><circle cx="7" cy="6.8" r="5.7" fill="#7cc142"/><path d="M7 5.2L2.9 13.2M7 5.2L11.1 13.2" fill="none" stroke="#f2f2f2" stroke-width="1.2"/><path d="M4.4 10.6h5.2" stroke="#e8f0e0" stroke-width="1"/><path d="M7 3.4l1 2.2-1 1.8-1-1.8z" fill="#8a8aa0"/></svg>
<svg style="left:4px;top:276px;" width="15" height="14" viewBox="0 0 15 14"><path d="M3.4 3.4h8.4M3.4 3.4l4 7.4M11.8 3.4l-4 7.4" stroke="#8a8d8f" stroke-width="1"/><circle cx="3.4" cy="3.4" r="2.6" fill="#4a90d9"/><circle cx="11.8" cy="3.4" r="2.6" fill="#e0605a"/><circle cx="7.4" cy="10.8" r="2.6" fill="#d9903c"/></svg>
<svg style="left:5px;top:368px;" width="13" height="14" viewBox="0 0 13 14"><path d="M4.8 1h3.4M6.5 1v2" stroke="#9a9c9e" stroke-width="1.2"/><circle cx="6.5" cy="8" r="5" fill="#5aa8e0" stroke="#a8aaac" stroke-width="1.4"/><path d="M6.5 8L8.8 5.6" stroke="#e8f2fa" stroke-width="1.1"/></svg>
<svg style="left:4px;top:486px;" width="14" height="15" viewBox="0 0 14 15"><path d="M3.2 5a3.8 3.8 0 0 1 7.6 0z" fill="#8aaa1c"/><path d="M4.2 0.6l1 1.6M9.8 0.6l-1 1.6" stroke="#8aaa1c" stroke-width=".9"/><rect x="3.2" y="5.6" width="7.6" height="6" rx=".7" fill="#8aaa1c"/><rect x="1" y="5.6" width="1.6" height="4.6" rx=".8" fill="#8aaa1c"/><rect x="11.4" y="5.6" width="1.6" height="4.6" rx=".8" fill="#8aaa1c"/><rect x="4.6" y="11" width="1.7" height="3.4" rx=".8" fill="#8aaa1c"/><rect x="7.7" y="11" width="1.7" height="3.4" rx=".8" fill="#8aaa1c"/></svg>
<svg style="left:1091px;top:110.9px;" width="15" height="15" viewBox="0 0 15 15"><path d="M12.68 8.62A5.4 5.4 0 1 1 4.3 3.08" fill="none" stroke="#96d05a" stroke-width="2.2"/><path d="M6 2.28A5.4 5.4 0 0 1 12.68 6.38" fill="none" stroke="#12b050" stroke-width="2.2"/><circle cx="7.4" cy="7.5" r="2.6" fill="#12b050"/></svg>
<svg style="left:1094px;top:391px;" width="9" height="13" viewBox="0 0 9 13"><rect x="0.7" y="0.7" width="7.6" height="11.6" rx="1" fill="none" stroke="#9a9c9e" stroke-width="1.3"/><rect x="2" y="2.2" width="5" height="7.4" fill="#55585a"/></svg>
<svg style="left:30px;top:540px;" width="13" height="9" viewBox="0 0 13 9"><rect x="0.6" y="0.4" width="11.6" height="1.8" fill="#d8d8d8"/><rect x="0.6" y="3.4" width="7.6" height="1.8" fill="#d8d8d8"/><rect x="0.6" y="6.4" width="10" height="1.8" fill="#d8d8d8"/></svg>
<svg style="left:121px;top:539px;" width="15" height="12" viewBox="0 0 15 12"><path d="M1.6 9.4A5.6 5.6 0 0 1 12.2 6.4" fill="none" stroke="#b4b4b4" stroke-width="1.9"/><path d="M5.2 9.4L9.6 3.8l.9.7-3.2 5.7z" fill="#c8c8c8"/><circle cx="11.8" cy="8.8" r="2.1" fill="#2ea043" stroke="#262626" stroke-width=".7"/></svg>
<svg style="left:250px;top:537px;" width="12" height="14" viewBox="0 0 12 14"><path d="M0.6 0.4L11.4 6.8 0.6 13.4z" fill="#32b14a"/></svg>
<svg style="left:322px;top:537px;" width="14" height="13" viewBox="0 0 14 13"><path d="M5.6 5.4a3.9 3.6 0 0 1 7.8 0v.8H5.6z" fill="#8a8d90"/><ellipse cx="8.7" cy="7.6" rx="4.8" ry="3" fill="#e8a850"/><circle cx="7.1" cy="7.6" r=".65" fill="#3a2a10"/><circle cx="10" cy="7.6" r=".65" fill="#3a2a10"/><path d="M5 13v-.8a2 2 0 0 1 2-2h3a2 2 0 0 1 2 2v.8z" fill="#2d8fd8"/><circle cx="3" cy="3.3" r="2.7" fill="#f4f4f4"/><path d="M1.5 2.5h3M1.5 4h3" stroke="#444" stroke-width=".8"/></svg>
<svg style="left:393px;top:537px;" width="14" height="13" viewBox="0 0 14 13"><rect x="0.5" y="0.5" width="12.4" height="12.2" fill="#050505" stroke="#7a7d80" stroke-width="1"/><rect x="0.5" y="0.3" width="12.4" height="2.4" fill="#7a7d80"/><path d="M3 4.8l2.6 2.2L3 9.2" fill="none" stroke="#f0f0f0" stroke-width="1.1"/><path d="M6.6 10h3.2" stroke="#f0f0f0" stroke-width="1.1"/></svg>
<svg style="left:482px;top:537px;" width="13" height="13" viewBox="0 0 13 13"><rect x="0.6" y="0.5" width="11.2" height="11.2" fill="#e2ae68" stroke="#f6d6a2" stroke-width="1.1"/><path d="M3 3.8h4.4M8.6 3.8h1M3 6.1h1.6M5.6 6.1h4M3 8.4h1.6M5.6 8.4h4" stroke="#7f7868" stroke-width="1"/></svg>
<svg style="left:875px;top:535.5px;" width="16" height="15" viewBox="0 0 16 15"><ellipse cx="7.4" cy="7" rx="7.3" ry="6.9" fill="#62c068"/><path d="M10.4 11.8l4.8 2.6-2-5.2z" fill="#62c068"/><text x="7.4" y="10.9" font-family="Liberation Sans, sans-serif" font-weight="bold" font-size="10.5" text-anchor="middle" fill="#1f3a20">3</text></svg>
<svg style="left:973px;top:537px;" width="13" height="13" viewBox="0 0 13 13"><rect x="0.6" y="0.8" width="11" height="10.8" fill="#3c3f41" stroke="#7a7d80" stroke-width="1.1"/><rect x="0" y="0" width="12.2" height="1.8" fill="#5a9fd8"/><rect x="2.4" y="3.6" width="7.4" height="6.2" fill="#5d93c4"/><path d="M3.2 5h5.6M3.2 6.7h5.6M3.2 8.4h3.6" stroke="#bcd6ee" stroke-width=".9"/></svg>
<svg style="left:10px;top:558px;" width="15" height="14" viewBox="0 0 15 14"><rect x="0.8" y="0.8" width="12.4" height="10.4" fill="#5a5d5f" stroke="#b8babc" stroke-width="1.3"/><rect x="0.2" y="12.6" width="13.6" height="1" fill="#b8babc"/></svg>
<svg style="left:45px;top:529px;" width="34" height="4" viewBox="0 0 34 4"><path d="M0.5 0.6h8.4L8 4H1.4z" fill="#77797b"/><path d="M20 0h5.6l1.6 2H34v2H20z" fill="#5f7d8a"/></svg>
<svg style="left:761px;top:560px;" width="6" height="10" viewBox="0 0 6 10"><path d="M0.6 4L3 0.8 5.4 4zM0.6 6L3 9.2 5.4 6z" fill="#a8aaac"/></svg>
<svg style="left:1068px;top:560px;" width="8" height="10" viewBox="0 0 8 10"><rect x="0.4" y="4.2" width="6.8" height="5.4" rx=".6" fill="#9a9c9e"/><path d="M1.8 4.4V2.8a2 2 0 0 1 4 0v1.6" fill="none" stroke="#9a9c9e" stroke-width="1.2"/><rect x="3.2" y="5.8" width="1.2" height="2.2" fill="#3c3f41"/></svg>
<svg style="left:1088px;top:558px;" width="14" height="14" viewBox="0 0 14 14"><path d="M3.4 4.6a3.6 4 0 0 1 7.2 0z" fill="#8a8d8f"/><path d="M1.4 5h11.2" stroke="#8a8d8f" stroke-width="1.2"/><rect x="3.6" y="5.6" width="6.8" height="4.4" rx="1.6" fill="none" stroke="#8a8d8f" stroke-width="1"/><circle cx="5.4" cy="7.4" r=".9" fill="#8a8d8f"/><circle cx="8.6" cy="7.4" r=".9" fill="#8a8d8f"/><path d="M2.2 13.6c0-2.6 2-3.4 4.8-3.4s4.8.8 4.8 3.4" fill="none" stroke="#8a8d8f" stroke-width="1.1"/><path d="M5 11.4h4" stroke="#8a8d8f" stroke-width="1.6"/></svg>
<div style="left:319px;top:124px;width:759px;height:408px;overflow:hidden;"><pre style="left:11px;top:2.1px;font-size:11.2px;letter-spacing:0.55px;line-height:16px;color:#606366;">40
41
42
43
44
45
46
47
48
49
50
51
52
53
54
55
56
57
58
59
60
61
62
63
64
65</pre><pre style="left:67px;top:1.5px;font-size:13px;letter-spacing:-0.8px;line-height:16px;color:#a9b7c6;">

HelloArApplication::HelloArApplication(AAssetManager<span style="position:relative;top:2.6px">*</span> asset_manager<span style="color:#cc7832">,</span> <b style="color:#cc7832">void</b><span style="position:relative;top:2.6px">*</span> env<span style="color:#cc7832">,</span>
                                       <b style="color:#cc7832">void</b><span style="position:relative;top:2.6px">*</span> context)
    : <span style="color:#9373a5">asset_manager_</span>(asset_manager) {
  <span style="color:#908b25">LOGI</span>(<span style="color:#6a8759">"OnCreate()"</span>)<span style="color:#cc7832">;</span>

  <span style="color:#808080">// === ATTENTION!  ATTENTION!  ATTENTION! ===</span>
  <span style="color:#808080">// This method can and will fail in user-facing situations.  Your application</span>
  <span style="color:#808080">// must handle these cases at least somewhat gracefully.  See HelloAR Java</span>
  <span style="color:#808080">// sample code for reasonable behavior.</span>
  <span style="color:#908b25">CHECK</span>(ArSession_create(env<span style="color:#cc7832">,</span> context<span style="color:#cc7832">,</span> &amp;<span style="color:#9373a5">ar_session_</span>) == <i style="color:#9876aa">AR_SUCCESS</i>)<span style="color:#cc7832">;</span>
  <span style="color:#908b25">CHECK</span>(<span style="color:#9373a5">ar_session_</span>)<span style="color:#cc7832">;</span>

  ArConfig<span style="position:relative;top:2.6px">*</span> ar_config = <b style="color:#cc7832">nullptr</b><span style="color:#cc7832">;</span>
  ArConfig_create(<span style="color:#9373a5">ar_session_</span><span style="color:#cc7832">,</span> &amp;ar_config)<span style="color:#cc7832">;</span>
  <span style="color:#908b25">CHECK</span>(ar_config)<span style="color:#cc7832">;</span>

  <b style="color:#cc7832">const</b> ArStatus status = ArSession_checkSupported(<span style="color:#9373a5">ar_session_</span><span style="color:#cc7832">,</span> ar_config)<span style="color:#cc7832">;</span>
  <span style="color:#908b25">CHECK</span>(status == <i style="color:#9876aa">AR_SUCCESS</i>)<span style="color:#cc7832">;</span>

  <span style="color:#908b25">CHECK</span>(ArSession_configure(<span style="color:#9373a5">ar_session_</span><span style="color:#cc7832">,</span> ar_config) == <i style="color:#9876aa">AR_SUCCESS</i>)<span style="color:#cc7832">;</span>

  ArConfig_destroy(ar_config)<span style="color:#cc7832">;</span>

  ArFrame_create(<span style="color:#9373a5">ar_session_</span><span style="color:#cc7832">,</span> &amp;<span style="color:#9373a5">ar_frame_</span>)<span style="color:#cc7832">;</span>
  <span style="color:#908b25">CHECK</span>(<span style="color:#9373a5">ar_frame_</span>)<span style="color:#cc7832">;</span></pre></div>
<span id="t0" class="t" style="left:740px;top:55.42px;font-size:19px;color:#1ba1e2;font-weight:bold;letter-spacing:-0.609px;">?</span>
<span id="t1" class="t" style="left:22.4px;top:4.63px;font-size:15.5px;color:#dfdbd2;font-weight:bold;letter-spacing:-0.130px;text-shadow:0 -1px 0 rgba(0,0,0,.45),0 1px 0 rgba(0,0,0,.3);">hello_ar_c </span>
<span id="t2" class="t" style="left:101.97px;top:4.63px;font-size:15.5px;color:#dfdbd2;font-weight:bold;letter-spacing:0.437px;text-shadow:0 -1px 0 rgba(0,0,0,.45),0 1px 0 rgba(0,0,0,.3);">- </span>
<span id="t3" class="t" style="left:112.31px;top:4.63px;font-size:15.5px;color:#dfdbd2;font-weight:bold;letter-spacing:1.323px;text-shadow:0 -1px 0 rgba(0,0,0,.45),0 1px 0 rgba(0,0,0,.3);">[~/</span>
<span id="t4" class="t" style="left:134.81px;top:4.63px;font-size:15.5px;color:#dfdbd2;font-weight:bold;letter-spacing:0.155px;text-shadow:0 -1px 0 rgba(0,0,0,.45),0 1px 0 rgba(0,0,0,.3);">Downloads/</span>
<span id="t5" class="t" style="left:223.35px;top:4.63px;font-size:15.5px;color:#dfdbd2;font-weight:bold;letter-spacing:0.046px;text-shadow:0 -1px 0 rgba(0,0,0,.45),0 1px 0 rgba(0,0,0,.3);">arcore_sdk/</span>
<span id="t6" class="t" style="left:310.89px;top:4.63px;font-size:15.5px;color:#dfdbd2;font-weight:bold;letter-spacing:0.188px;text-shadow:0 -1px 0 rgba(0,0,0,.45),0 1px 0 rgba(0,0,0,.3);">samples/</span>
<span id="t7" class="t" style="left:378.75px;top:4.63px;font-size:15.5px;color:#dfdbd2;font-weight:bold;letter-spacing:-0.032px;text-shadow:0 -1px 0 rgba(0,0,0,.45),0 1px 0 rgba(0,0,0,.3);">hello_ar_c] </span>
<span id="t8" class="t" style="left:464.52px;top:4.63px;font-size:15.5px;color:#dfdbd2;font-weight:bold;letter-spacing:0.437px;text-shadow:0 -1px 0 rgba(0,0,0,.45),0 1px 0 rgba(0,0,0,.3);">- </span>
<span id="t9" class="t" style="left:474.87px;top:4.63px;font-size:15.5px;color:#dfdbd2;font-weight:bold;letter-spacing:0.577px;text-shadow:0 -1px 0 rgba(0,0,0,.45),0 1px 0 rgba(0,0,0,.3);">[app] </span>
<span id="t10" class="t" style="left:520.52px;top:4.63px;font-size:15.5px;color:#dfdbd2;font-weight:bold;letter-spacing:0.437px;text-shadow:0 -1px 0 rgba(0,0,0,.45),0 1px 0 rgba(0,0,0,.3);">- </span>
<span id="t11" class="t" style="left:530.86px;top:4.63px;font-size:15.5px;color:#dfdbd2;font-weight:bold;letter-spacing:1.471px;text-shadow:0 -1px 0 rgba(0,0,0,.45),0 1px 0 rgba(0,0,0,.3);">~/</span>
<span id="t12" class="t" style="left:547.16px;top:4.63px;font-size:15.5px;color:#dfdbd2;font-weight:bold;letter-spacing:0.155px;text-shadow:0 -1px 0 rgba(0,0,0,.45),0 1px 0 rgba(0,0,0,.3);">Downloads/</span>
<span id="t13" class="t" style="left:635.7px;top:4.63px;font-size:15.5px;color:#dfdbd2;font-weight:bold;letter-spacing:0.046px;text-shadow:0 -1px 0 rgba(0,0,0,.45),0 1px 0 rgba(0,0,0,.3);">arcore_sdk/</span>
<span id="t14" class="t" style="left:723.24px;top:4.63px;font-size:15.5px;color:#dfdbd2;font-weight:bold;letter-spacing:0.188px;text-shadow:0 -1px 0 rgba(0,0,0,.45),0 1px 0 rgba(0,0,0,.3);">samples/</span>
<span id="t15" class="t" style="left:791.1px;top:4.63px;font-size:15.5px;color:#dfdbd2;font-weight:bold;letter-spacing:-0.109px;text-shadow:0 -1px 0 rgba(0,0,0,.45),0 1px 0 rgba(0,0,0,.3);">hello_ar_c/</span>
<span id="t16" class="t" style="left:870.9px;top:4.63px;font-size:15.5px;color:#dfdbd2;font-weight:bold;letter-spacing:0.401px;text-shadow:0 -1px 0 rgba(0,0,0,.45),0 1px 0 rgba(0,0,0,.3);">app/</span>
<span id="t17" class="t" style="left:904.38px;top:4.63px;font-size:15.5px;color:#dfdbd2;font-weight:bold;letter-spacing:0.031px;text-shadow:0 -1px 0 rgba(0,0,0,.45),0 1px 0 rgba(0,0,0,.3);">src/</span>
<span id="t18" class="t" style="left:932.09px;top:4.63px;font-size:15.5px;color:#dfdbd2;font-weight:bold;letter-spacing:0.405px;text-shadow:0 -1px 0 rgba(0,0,0,.45),0 1px 0 rgba(0,0,0,.3);">main/</span>
<span id="t19" class="t" style="left:974.6px;top:4.63px;font-size:15.5px;color:#dfdbd2;font-weight:bold;letter-spacing:0.121px;text-shadow:0 -1px 0 rgba(0,0,0,.45),0 1px 0 rgba(0,0,0,.3);">cpp/</span>
<span id="t20" class="t" style="left:1006.96px;top:4.63px;font-size:15.5px;color:#dfdbd2;font-weight:bold;letter-spacing:0.254px;text-shadow:0 -1px 0 rgba(0,0,0,.45),0 1px 0 rgba(0,0,0,.3);">hello</span>
<span id="t21" class="t" style="left:7px;top:29.50px;font-size:13px;color:#bbbbbb;letter-spacing:0.008px;"><u>F</u>ile</span>
<span id="t22" class="t" style="left:40px;top:29.50px;font-size:13px;color:#bbbbbb;letter-spacing:0.398px;"><u>E</u>dit</span>
<span id="t23" class="t" style="left:77px;top:29.50px;font-size:13px;color:#bbbbbb;letter-spacing:0.012px;"><u>V</u>iew</span>
<span id="t24" class="t" style="left:118px;top:29.50px;font-size:13px;color:#bbbbbb;letter-spacing:0.461px;"><u>N</u>avigate</span>
<span id="t25" class="t" style="left:185px;top:29.50px;font-size:13px;color:#bbbbbb;letter-spacing:0.227px;"><u>C</u>ode</span>
<span id="t26" class="t" style="left:230px;top:29.50px;font-size:13px;color:#bbbbbb;letter-spacing:-0.038px;">Anal<u>y</u>ze</span>
<span id="t27" class="t" style="left:289px;top:29.50px;font-size:13px;color:#bbbbbb;letter-spacing:0.482px;"><u>R</u>efactor</span>
<span id="t28" class="t" style="left:354px;top:29.50px;font-size:13px;color:#bbbbbb;letter-spacing:0.216px;"><u>B</u>uild</span>
<span id="t29" class="t" style="left:397px;top:29.50px;font-size:13px;color:#bbbbbb;letter-spacing:0.047px;">R<u>u</u>n</span>
<span id="t30" class="t" style="left:434px;top:29.50px;font-size:13px;color:#bbbbbb;letter-spacing:0.528px;"><u>T</u>ools</span>
<span id="t31" class="t" style="left:478px;top:29.50px;font-size:13px;color:#bbbbbb;letter-spacing:-0.911px;">VC<u>S</u></span>
<span id="t32" class="t" style="left:516px;top:29.50px;font-size:13px;color:#bbbbbb;letter-spacing:0.125px;"><u>W</u>indow</span>
<span id="t33" class="t" style="left:575px;top:29.50px;font-size:13px;color:#bbbbbb;letter-spacing:0.312px;"><u>H</u>elp</span>
<span id="t34" class="t" style="left:29px;top:81.50px;font-size:13px;color:#bbbbbb;font-weight:bold;letter-spacing:0.467px;">hello_ar_c</span>
<span id="t35" class="t" style="left:131px;top:81.50px;font-size:13px;color:#bbbbbb;font-weight:bold;letter-spacing:1.292px;">app</span>
<span id="t36" class="t" style="left:189px;top:81.50px;font-size:13px;color:#bbbbbb;letter-spacing:0.552px;">src</span>
<span id="t37" class="t" style="left:241px;top:81.50px;font-size:13px;color:#bbbbbb;letter-spacing:0.453px;">main</span>
<span id="t38" class="t" style="left:302px;top:81.50px;font-size:13px;color:#bbbbbb;letter-spacing:0.285px;">java</span>
<span id="t39" class="t" style="left:384.5px;top:54.50px;font-size:13px;color:#bbbbbb;letter-spacing:0.766px;">app</span>
<span id="t40" class="t" style="left:51px;top:103.84px;font-size:12px;color:#bbbbbb;letter-spacing:0.232px;">Android</span>
<span id="t41" class="t" style="left:64px;top:125.50px;font-size:13px;color:#bbbbbb;font-weight:bold;letter-spacing:1.292px;">app</span>
<span id="t42" class="t" style="left:83px;top:145.50px;font-size:13px;color:#bbbbbb;letter-spacing:0.595px;">manifests</span>
<span id="t43" class="t" style="left:83px;top:165.50px;font-size:13px;color:#bbbbbb;letter-spacing:0.285px;">java</span>
<span id="t44" class="t" style="left:83px;top:185.50px;font-size:13px;color:#bbbbbb;letter-spacing:0.677px;">cpp</span>
<span id="t45" class="t" style="left:103px;top:205.50px;font-size:13px;color:#bbbbbb;letter-spacing:0.469px;">arcore_sdk</span>
<span id="t46" class="t" style="left:176px;top:205.50px;font-size:13px;color:#808385;letter-spacing:0.516px;">(Shared </span>
<span id="t47" class="t" style="left:230.0px;top:205.50px;font-size:13px;color:#808385;letter-spacing:0.240px;">Library)</span>
<span id="t48" class="t" style="left:103px;top:225.50px;font-size:13px;color:#bbbbbb;letter-spacing:0.321px;">hello_ar_native</span>
<span id="t49" class="t" style="left:200px;top:225.50px;font-size:13px;color:#808385;letter-spacing:0.516px;">(Shared </span>
<span id="t50" class="t" style="left:254.0px;top:225.50px;font-size:13px;color:#808385;letter-spacing:0.333px;">Library, </span>
<span id="t51" class="t" style="left:303.0px;top:225.50px;font-size:13px;color:#808385;letter-spacing:1.391px;">~/</span>
<span id="t52" class="t" style="left:123px;top:245.50px;font-size:13px;color:#bbbbbb;letter-spacing:0.627px;">background_renderer.cc</span>
<span id="t53" class="t" style="left:123px;top:265.50px;font-size:13px;color:#bbbbbb;letter-spacing:0.646px;">background_renderer.h</span>
<span id="t54" class="t" style="left:123px;top:285.50px;font-size:13px;color:#bbbbbb;letter-spacing:0.423px;">hello_ar_application.cc</span>
<span id="t55" class="t" style="left:123px;top:305.50px;font-size:13px;color:#bbbbbb;letter-spacing:0.433px;">hello_ar_application.h</span>
<span id="t56" class="t" style="left:123px;top:325.50px;font-size:13px;color:#bbbbbb;letter-spacing:0.455px;">jni_interface.cc</span>
<span id="t57" class="t" style="left:123px;top:345.50px;font-size:13px;color:#bbbbbb;letter-spacing:0.470px;">jni_interface.h</span>
<span id="t58" class="t" style="left:123px;top:365.50px;font-size:13px;color:#bbbbbb;letter-spacing:0.558px;">obj_renderer.cc</span>
<span id="t59" class="t" style="left:123px;top:385.50px;font-size:13px;color:#bbbbbb;letter-spacing:0.583px;">obj_renderer.h</span>
<span id="t60" class="t" style="left:123px;top:405.50px;font-size:13px;color:#bbbbbb;letter-spacing:0.584px;">plane_renderer.cc</span>
<span id="t61" class="t" style="left:123px;top:425.50px;font-size:13px;color:#bbbbbb;letter-spacing:0.605px;">plane_renderer.h</span>
<span id="t62" class="t" style="left:123px;top:445.50px;font-size:13px;color:#bbbbbb;letter-spacing:0.532px;">point_cloud_renderer.cc</span>
<span id="t63" class="t" style="left:123px;top:465.50px;font-size:13px;color:#bbbbbb;letter-spacing:0.545px;">point_cloud_renderer.h</span>
<span id="t64" class="t" style="left:123px;top:485.50px;font-size:13px;color:#bbbbbb;letter-spacing:0.538px;">util.cc</span>
<span id="t65" class="t" style="left:123px;top:505.50px;font-size:13px;color:#bbbbbb;letter-spacing:0.589px;">util.h</span>
<span id="t66" class="t" style="left:83px;top:525.50px;font-size:13px;color:#6c6e70;letter-spacing:0.737px;clip-path:inset(0 0 8.6px 0);">assets</span>
<span id="t67" class="t" style="left:319px;top:104.50px;font-size:13px;color:#bbbbbb;letter-spacing:0.357px;">Manifest.xm</span>
<span id="t68" class="t" style="left:393.0px;top:104.50px;font-size:13px;color:#808284;letter-spacing:0.109px;">l</span>
<span id="t69" class="t" style="left:446px;top:104.50px;font-size:13px;color:#bbbbbb;letter-spacing:0.285px;">HelloArActivity.java</span>
<span id="t70" class="t" style="left:612px;top:104.50px;font-size:13px;color:#bbbbbb;letter-spacing:0.627px;">background_renderer.cc</span>
<span id="t71" class="t" style="left:816px;top:104.50px;font-size:13px;color:#bbbbbb;letter-spacing:0.423px;">hello_ar_application.cc</span>
<span id="t72" class="t" style="left:1077.5px;top:106.53px;font-size:10px;color:#bbbbbb;letter-spacing:0.438px;">5</span>
<span id="t73" class="t" style="left:4.14px;top:165px;transform-origin:0 0;transform:rotate(-90deg);font-size:12px;color:#ffffff;letter-spacing:0.547px;text-underline-offset:0.2px;"><u>1</u>: </span>
<span id="t74" class="t" style="left:4.14px;top:150.0px;transform-origin:0 0;transform:rotate(-90deg);font-size:12px;color:#ffffff;letter-spacing:0.234px;text-underline-offset:0.2px;">Project</span>
<span id="t75" class="t" style="left:4.14px;top:273px;transform-origin:0 0;transform:rotate(-90deg);font-size:12px;color:#bbbbbb;letter-spacing:0.547px;text-underline-offset:0.2px;"><u>7</u>: </span>
<span id="t76" class="t" style="left:4.14px;top:258.0px;transform-origin:0 0;transform:rotate(-90deg);font-size:12px;color:#bbbbbb;letter-spacing:0.479px;text-underline-offset:0.2px;">Structure</span>
<span id="t77" class="t" style="left:4.34px;top:363.5px;transform-origin:0 0;transform:rotate(-90deg);font-size:12px;color:#bbbbbb;letter-spacing:0.412px;">Captures</span>
<span id="t78" class="t" style="left:4.34px;top:482.5px;transform-origin:0 0;transform:rotate(-90deg);font-size:12px;color:#bbbbbb;letter-spacing:0.328px;">Build </span>
<span id="t79" class="t" style="left:4.34px;top:450.5px;transform-origin:0 0;transform:rotate(-90deg);font-size:12px;color:#bbbbbb;letter-spacing:0.482px;">Variants</span>
<span id="t80" class="t" style="left:4.34px;top:575.5px;transform-origin:0 0;transform:rotate(-90deg);font-size:12px;color:#bbbbbb;letter-spacing:0.293px;clip-path:inset(0 0 0 42.5px);">Favorites</span>
<span id="t81" class="t" style="left:1106.16px;top:130px;transform-origin:0 0;transform:rotate(90deg);font-size:12px;color:#bbbbbb;letter-spacing:0.328px;">Gradle</span>
<span id="t82" class="t" style="left:1106.16px;top:408px;transform-origin:0 0;transform:rotate(90deg);font-size:12px;color:#bbbbbb;letter-spacing:0.141px;">Device </span>
<span id="t83" class="t" style="left:1106.16px;top:449.0px;transform-origin:0 0;transform:rotate(90deg);font-size:12px;color:#bbbbbb;letter-spacing:0.066px;">File </span>
<span id="t84" class="t" style="left:1106.16px;top:472.0px;transform-origin:0 0;transform:rotate(90deg);font-size:12px;color:#bbbbbb;letter-spacing:0.289px;">Explorer</span>
<span id="t85" class="t" style="left:47px;top:534.84px;font-size:12px;color:#bbbbbb;letter-spacing:0.547px;"><u>6</u>: </span>
<span id="t86" class="t" style="left:62.0px;top:534.84px;font-size:12px;color:#bbbbbb;letter-spacing:0.161px;">Logcat</span>
<span id="t87" class="t" style="left:139px;top:534.84px;font-size:12px;color:#bbbbbb;letter-spacing:0.287px;">Android </span>
<span id="t88" class="t" style="left:186.0px;top:534.84px;font-size:12px;color:#bbbbbb;letter-spacing:0.373px;">Profiler</span>
<span id="t89" class="t" style="left:267px;top:534.84px;font-size:12px;color:#bbbbbb;letter-spacing:0.547px;"><u>4</u>: </span>
<span id="t90" class="t" style="left:282.0px;top:534.84px;font-size:12px;color:#bbbbbb;letter-spacing:-0.339px;">Run</span>
<span id="t91" class="t" style="left:339px;top:534.84px;font-size:12px;color:#bbbbbb;letter-spacing:-0.363px;">TODO</span>
<span id="t92" class="t" style="left:410px;top:534.84px;font-size:12px;color:#bbbbbb;letter-spacing:0.580px;">Terminal</span>
<span id="t93" class="t" style="left:499px;top:534.84px;font-size:12px;color:#bbbbbb;letter-spacing:0.547px;"><u>0</u>: </span>
<span id="t94" class="t" style="left:514.0px;top:534.84px;font-size:12px;color:#bbbbbb;letter-spacing:0.412px;">Messages</span>
<span id="t95" class="t" style="left:895px;top:534.84px;font-size:12px;color:#bbbbbb;letter-spacing:0.161px;">Event </span>
<span id="t96" class="t" style="left:930.0px;top:534.84px;font-size:12px;color:#bbbbbb;letter-spacing:-0.010px;">Log</span>
<span id="t97" class="t" style="left:990px;top:534.84px;font-size:12px;color:#bbbbbb;letter-spacing:0.377px;">Gradle </span>
<span id="t98" class="t" style="left:1032.0px;top:534.84px;font-size:12px;color:#bbbbbb;letter-spacing:0.281px;">Console</span>
<span id="t99" class="t" style="left:32px;top:556.50px;font-size:13px;color:#bbbbbb;letter-spacing:0.670px;">Instant </span>
<span id="t100" class="t" style="left:80.0px;top:556.50px;font-size:13px;color:#bbbbbb;letter-spacing:0.133px;">Run </span>
<span id="t101" class="t" style="left:108.0px;top:556.50px;font-size:13px;color:#bbbbbb;letter-spacing:0.613px;">performed </span>
<span id="t102" class="t" style="left:177.0px;top:556.50px;font-size:13px;color:#bbbbbb;letter-spacing:0.578px;">a </span>
<span id="t103" class="t" style="left:189.0px;top:556.50px;font-size:13px;color:#bbbbbb;letter-spacing:0.353px;">full </span>
<span id="t104" class="t" style="left:211.0px;top:556.50px;font-size:13px;color:#bbbbbb;letter-spacing:0.487px;">build </span>
<span id="t105" class="t" style="left:245.0px;top:556.50px;font-size:13px;color:#bbbbbb;letter-spacing:0.672px;">and </span>
<span id="t106" class="t" style="left:273.0px;top:556.50px;font-size:13px;color:#bbbbbb;letter-spacing:0.518px;">install </span>
<span id="t107" class="t" style="left:314.0px;top:556.50px;font-size:13px;color:#bbbbbb;letter-spacing:0.505px;">since </span>
<span id="t108" class="t" style="left:351.0px;top:556.50px;font-size:13px;color:#bbbbbb;letter-spacing:0.828px;">the </span>
<span id="t109" class="t" style="left:376.0px;top:556.50px;font-size:13px;color:#bbbbbb;letter-spacing:0.612px;">installation </span>
<span id="t110" class="t" style="left:449.0px;top:556.50px;font-size:13px;color:#bbbbbb;letter-spacing:0.641px;">on </span>
<span id="t111" class="t" style="left:469.0px;top:556.50px;font-size:13px;color:#bbbbbb;letter-spacing:0.828px;">the </span>
<span id="t112" class="t" style="left:494.0px;top:556.50px;font-size:13px;color:#bbbbbb;letter-spacing:0.356px;">devic... </span>
<span id="t113" class="t" style="left:542.0px;top:556.50px;font-size:13px;color:#bbbbbb;letter-spacing:0.607px;">(today </span>
<span id="t114" class="t" style="left:586.0px;top:556.50px;font-size:13px;color:#bbbbbb;letter-spacing:0.641px;">10:48 </span>
<span id="t115" class="t" style="left:626.0px;top:556.50px;font-size:13px;color:#bbbbbb;letter-spacing:-0.281px;">AM)</span>
<span id="t116" class="t" style="left:664px;top:556.50px;font-size:13px;color:#bbbbbb;letter-spacing:0.641px;">1:1</span>
<span id="t117" class="t" style="left:699.5px;top:556.50px;font-size:13px;color:#787a7c;letter-spacing:-1.086px;">LF</span>
<span id="t118" class="t" style="left:725px;top:556.50px;font-size:13px;color:#bbbbbb;letter-spacing:-0.369px;">UTF-8</span>
<span id="t119" class="t" style="left:775px;top:556.50px;font-size:13px;color:#bbbbbb;letter-spacing:0.441px;">Context: </span>
<span id="t120" class="t" style="left:831.0px;top:556.50px;font-size:13px;color:#bbbbbb;letter-spacing:0.346px;">hello_ar_native-Debug-arm64-v8a</span>
</div></body></html>
